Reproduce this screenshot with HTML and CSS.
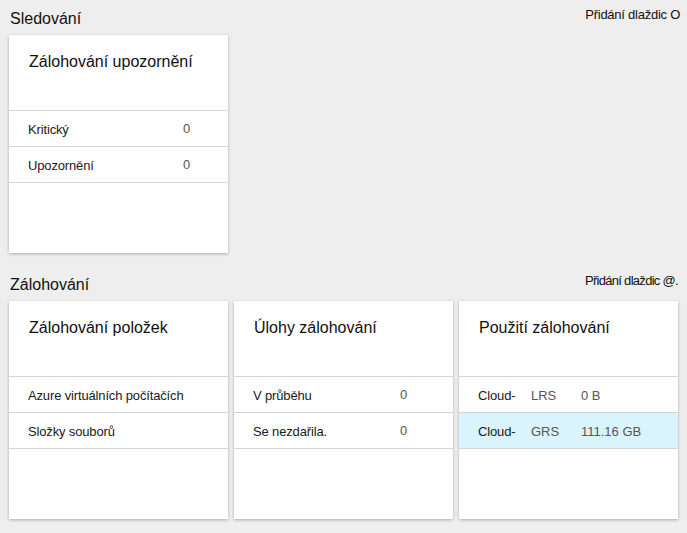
FILE: index.html
```html
<!DOCTYPE html>
<html lang="cs">
<head>
<meta charset="utf-8">
<title>Zálohování</title>
<link rel="stylesheet" href="styles.css">
</head>
<body>
<section class="section">
  <div class="section-head">
    <h2 class="section-title">Sledování</h2>
    <span class="add-tiles">Přidání dlaždic O</span>
  </div>
  <div class="tiles">
    <div class="card">
      <div class="card-head">Zálohování upozornění</div>
      <div class="row row-alerts"><span class="label">Kritický</span><span class="value">0</span></div>
      <div class="row row-alerts"><span class="label">Upozornění</span><span class="value">0</span></div>
    </div>
  </div>
</section>
<section class="section section-second">
  <div class="section-head">
    <h2 class="section-title">Zálohování</h2>
    <span class="add-tiles add-tiles-second">Přidání dlaždic @.</span>
  </div>
  <div class="tiles">
    <div class="card">
      <div class="card-head">Zálohování položek</div>
      <div class="row row-items"><span class="label">Azure virtuálních počítačích</span></div>
      <div class="row row-items"><span class="label">Složky souborů</span></div>
    </div>
    <div class="card">
      <div class="card-head">Úlohy zálohování</div>
      <div class="row row-jobs"><span class="label">V průběhu</span><span class="value">0</span></div>
      <div class="row row-jobs"><span class="label">Se nezdařila.</span><span class="value">0</span></div>
    </div>
    <div class="card">
      <div class="card-head">Použití zálohování</div>
      <div class="row row-usage"><span class="label">Cloud-</span><span class="value">LRS</span><span class="value">0 B</span></div>
      <div class="row row-usage row-selected"><span class="label">Cloud-</span><span class="value">GRS</span><span class="value">111.16 GB</span></div>
    </div>
  </div>
</section>
</body>
</html>
```
FILE: styles.css
```css
* { box-sizing: border-box; }
html, body { margin: 0; padding: 0; }
body {
  background: #eeeeee;
  font-family: "Liberation Sans", Arial, sans-serif;
  color: #111;
  width: 687px;
  height: 533px;
  overflow: hidden;
}
.section { padding: 0 9px; }
.section-second { margin-top: 13px; }
.section-head {
  height: 35px;
  display: flex;
  justify-content: space-between;
  align-items: flex-start;
}
.section-title {
  margin: 0;
  padding-top: 9px;
  font-size: 16px;
  line-height: 20px;
  font-weight: normal;
  padding-left: 1px;
}
.add-tiles {
  padding-top: 7px;
  font-size: 13px;
  line-height: 16px;
  letter-spacing: -0.25px;
  margin-right: -2px;
}
.add-tiles-second { margin-right: 0; letter-spacing: -0.7px; }
.tiles {
  display: grid;
  grid-template-columns: repeat(3, 219px);
  gap: 6px;
}
.card {
  background: #fff;
  height: 218px;
  box-shadow: 0 1px 3px rgba(0,0,0,0.28);
}
.card-head {
  height: 76px;
  padding: 17px 20px 0;
  font-size: 16px;
  line-height: 20px;
  border-bottom: 1px solid #d4d4d4;
}
.row {
  height: 36px;
  display: flex;
  align-items: center;
  padding-left: 19px;
  border-bottom: 1px solid #d4d4d4;
  font-size: 13px;
  padding-top: 2px;
  letter-spacing: -0.15px;
}
.label { color: #1a1a1a; }
.value { color: #555; letter-spacing: 0; }
.row-alerts .value, .row-jobs .value { margin-top: -3px; }
.row-alerts .label { width: 155px; }
.row-jobs .label { width: 147px; }
.row-usage .label { width: 53px; }
.row-usage .value:nth-child(2) { width: 50px; }
.row-selected { background: #d9f4fc; }
```
